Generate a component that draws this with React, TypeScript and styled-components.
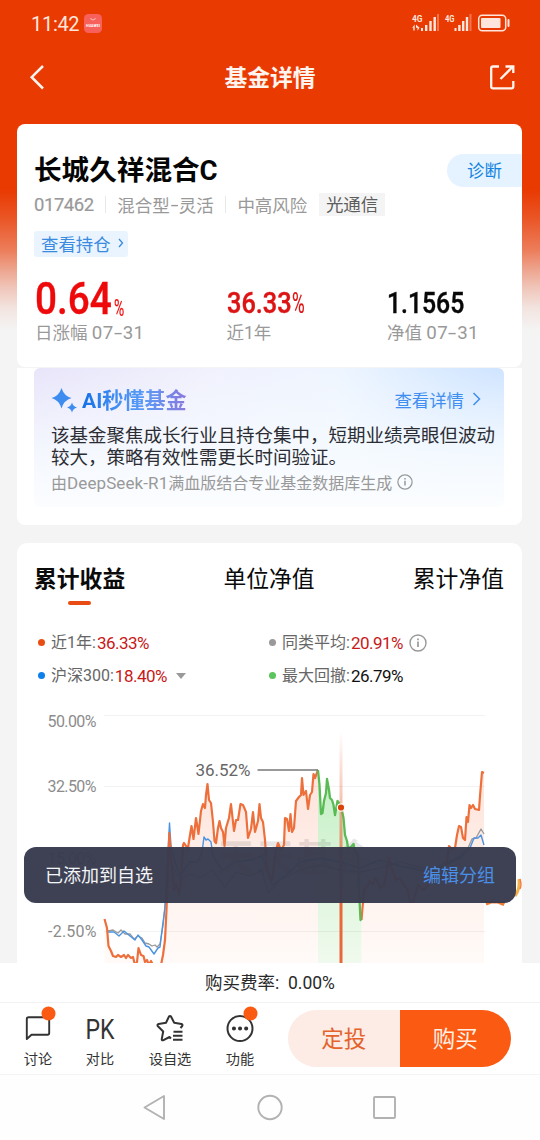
import React from 'react';
import styled, { createGlobalStyle } from 'styled-components';

const Global = createGlobalStyle`
  * { box-sizing: border-box; }
  body {
    margin: 0;
    font-family: Roboto, "Noto Sans CJK SC", sans-serif;
    background: #f4f4f4;
  }
`;

const Screen = styled.div`
  position: relative;
  width: 540px;
  height: 1140px;
  overflow: hidden;
  display: flex;
  flex-direction: column;
  background: linear-gradient(#e93a02 0, #e93a02 190px, #ea5525 218px, #ec7d5a 250px, #eda18a 268px, #f0c6ba 288px, #f2e4df 308px, #f4f4f4 330px);
  white-space: nowrap;
`;

const StatusBar = styled.div`
  flex: none;
  height: 46px;
  display: flex;
  align-items: center;
  padding: 0 30px 0 31px;
  color: #ffe6dc;
`;

const Clock = styled.span`
  font-size: 20px;
  letter-spacing: -0.3px;
  margin-right: 5px;
  padding-top: 1px;
`;

const StatusIcons = styled.svg`
  margin-left: auto;
`;

const TitleBar = styled.header`
  flex: none;
  height: 78px;
  display: flex;
  justify-content: space-between;
  padding: 18px 25px 0 29px;
  color: #fff4ee;
`;

const PageTitle = styled.h1`
  margin: 2px 0 0 6px;
  font-size: 22.8px;
  line-height: 26px;
  font-weight: 700;
`;

const Card = styled.section<{ $h: number; $r: string; $mt?: number }>`
  flex: none;
  height: ${p => p.$h}px;
  margin: ${p => p.$mt ?? 0}px 18px 0 17px;
  border-radius: ${p => p.$r};
  background: #fff;
  overflow: hidden;
`;

const NameRow = styled.div`
  display: flex;
  justify-content: space-between;
  align-items: center;
  height: 40px;
  margin-top: 26px;
  padding-left: 17px;
`;

const FundName = styled.h2`
  margin: 0;
  padding-top: 2px;
  font-size: 27.6px;
  font-weight: 700;
  line-height: 42px;
  color: #050505;
`;

const DiagnoseButton = styled.button`
  width: 75px;
  height: 33px;
  border: 0;
  padding: 0 0 1px;
  border-radius: 17px 0 0 17px;
  background: #e4f3ff;
  color: #1583e0;
  font: inherit;
  font-size: 17.4px;
`;

const MetaRow = styled.div`
  display: flex;
  align-items: center;
  height: 24px;
  margin-top: 3px;
  padding: 0 0 1px 17px;
  font-size: 17.5px;
  color: #999;
`;

const Dash = styled.span`
  display: inline-block;
  width: 9px;
  text-align: center;
  transform: scaleX(1.6);
`;

const Code = styled.span`
  font-size: 18.5px;
  letter-spacing: -0.45px;
  -webkit-text-stroke: 0.2px #999;
`;

const Divider = styled.i`
  width: 1px;
  height: 17px;
  margin: 0 11.3px;
  background: #e8e8e8;
`;

const Tag = styled.span`
  height: 23px;
  line-height: 24px;
  margin-left: 11.5px;
  padding: 0 7px;
  background: #f4f4f4;
  color: #5d5d5d;
`;

const HoldingsLink = styled.a`
  display: flex;
  align-items: center;
  gap: 7px;
  width: 94px;
  height: 26px;
  margin: 14px 0 0 17px;
  padding: 0 0 2px 7px;
  border-radius: 3px;
  background: #eaf4ff;
  color: #3a8be0;
  font-size: 17.4px;
`;

const Stats = styled.div`
  display: grid;
  grid-template-columns: 191.5px 160.5px 1fr;
  margin-top: 18px;
  padding-left: 18px;
`;

const Figure = styled.div<{ $c: string }>`
  display: flex;
  align-items: flex-end;
  height: 43px;
  color: ${p => p.$c};
`;

const Digits = styled.span<{ $size: number; $w: number; $sx: number; $drop: number; $thin?: boolean }>`
  width: ${p => p.$w}px;
  font-size: ${p => p.$size}px;
  line-height: 1;
  font-weight: ${p => (p.$thin ? 400 : 500)};
  -webkit-text-stroke: ${p => (p.$thin ? 0.2 : 0.4)}px currentColor;
  transform: scaleX(${p => p.$sx});
  transform-origin: left bottom;
  margin-bottom: ${p => p.$drop}px;
`;

const StatLabel = styled.div`
  height: 24px;
  margin-top: 3px;
  line-height: 24px;
  font-size: 17.5px;
  color: #999;
`;

const StatDate = styled.span`
  font-size: 18.7px;
  letter-spacing: 0.4px;
`;

const AiPanel = styled.div`
  height: 139px;
  margin: 0 18px 0 17px;
  padding: 17px 0 0 17px;
  border-radius: 6px;
  background:
    linear-gradient(to bottom, rgba(247,251,255,0) 0, rgba(247,251,255,.8) 60%, #fbfdff 100%),
    radial-gradient(circle at 100% 0, #cfe4ff 0, rgba(225,239,255,0) 35%),
    linear-gradient(100deg, #e8e5fa 0, #f0f1fd 35%, #eff6ff 65%, #e9f3ff 100%);
`;

const AiHead = styled.div`
  display: flex;
  align-items: center;
  height: 30px;
`;

const AiTitle = styled.span`
  margin-left: 4px;
  font-size: 21.1px;
  line-height: 32px;
  padding-top: 1px;
  font-weight: 700;
  color: transparent;
  background: linear-gradient(90deg, #1270e6, #3f8cf2 30%, #5a9af5 60%, #8b78dc);
  background-clip: text;
  -webkit-background-clip: text;
`;

const DetailLink = styled.a`
  display: flex;
  align-items: center;
  gap: 8px;
  margin-left: auto;
  padding: 0 23px 2px 0;
  font-size: 17.4px;
  color: #3f8ef0;
`;

const Summary = styled.p`
  margin: 11px 0 0;
  font-size: 18.5px;
  line-height: 21.7px;
  color: #2b2d33;
`;

const Source = styled.div`
  display: flex;
  align-items: center;
  height: 24px;
  margin-top: 1px;
  font-size: 16px;
  color: #999;
  svg { margin-left: 5px; }
`;

const Model = styled.span`
  font-size: 17px;
  letter-spacing: 0.1px;
`;

const Tabs = styled.nav`
  display: flex;
  justify-content: space-between;
  height: 64px;
  padding: 20px 18px 0 17px;
`;

const Tab = styled.div<{ $on?: boolean }>`
  display: flex;
  flex-direction: column;
  align-items: center;
  font-size: 22.8px;
  line-height: 34px;
  font-weight: ${p => (p.$on ? 700 : 400)};
  color: #0a0a0a;
  &::after {
    content: '';
    display: ${p => (p.$on ? 'block' : 'none')};
    width: 23px;
    height: 4px;
    margin-top: 3.5px;
    border-radius: 2px;
    background: #e84c14;
  }
`;

const Legend = styled.div`
  display: grid;
  grid-template-columns: 231px 1fr;
  grid-auto-rows: 33px;
  align-items: center;
  height: 93px;
  padding: 19px 0 0 21px;
  font-size: 16px;
  color: #666;
`;

const LegendItem = styled.div`
  display: flex;
  align-items: center;
  height: 20px;
  line-height: 20px;
`;

const Dot = styled.i<{ $c: string }>`
  width: 7px;
  height: 7px;
  margin-right: 6px;
  border-radius: 50%;
  background: ${p => p.$c};
`;

const Value = styled.b<{ $c: string }>`
  font-weight: 400;
  font-size: 17px;
  letter-spacing: -0.5px;
  margin: 0 6px 0 1px;
  color: ${p => p.$c};
`;

const DropArrow = styled.svg`
  margin-left: 3px;
`;

const Chart = styled.svg`
  display: block;
`;

const Toast = styled.div`
  position: absolute;
  left: 24px;
  top: 847px;
  width: 492px;
  height: 55.5px;
  display: flex;
  align-items: center;
  justify-content: space-between;
  padding: 0 21px 1px 21px;
  border-radius: 12px;
  background: rgba(56, 59, 77, 0.97);
  color: #f4f5f8;
  font-size: 18px;
`;

const ToastAction = styled.a`
  color: #4a8fe8;
`;

const Fee = styled.div`
  flex: none;
  height: 40px;
  line-height: 40px;
  border-bottom: 1px solid #f2f2f2;
  background: #fff;
  text-align: center;
  font-size: 17.5px;
  color: #2a2a2a;
`;

const ActionBar = styled.footer`
  flex: none;
  display: flex;
  height: 72px;
  padding-left: 7px;
  border-bottom: 1px solid #f4f4f4;
  background: #fff;
`;

const Action = styled.div<{ $w: number }>`
  width: ${p => p.$w}px;
  display: flex;
  flex-direction: column;
  align-items: center;
  font-size: 14.2px;
  line-height: 20px;
  color: #333;
`;

const ActionIcon = styled.svg`
  flex: none;
  margin-bottom: 1px;
`;

const Buttons = styled.div`
  display: flex;
  width: 223px;
  height: 57.5px;
  margin: 6.5px 0 0 17px;
  border-radius: 29px;
  overflow: hidden;
`;

const TradeButton = styled.button<{ $buy?: boolean }>`
  flex: 1;
  border: 0;
  padding: 0 0 2px;
  font: inherit;
  font-size: 22.5px;
  background: ${p => (p.$buy ? '#fb5a13' : '#fcece5')};
  color: ${p => (p.$buy ? '#fff0e4' : '#e4622c')};
`;

const SystemNav = styled.div`
  flex: 1;
  background: #fefefe;
`;

const InfoIcon = ({ s }: { s: number }) => (
  <svg width={s} height={s} viewBox="0 0 18 18" fill="none" stroke="#999" strokeWidth="1.4">
    <circle cx="9" cy="9" r="8" />
    <path d="M9 7.6v5.4M9 4.6v1.7" strokeWidth="1.7" />
  </svg>
);

const rise =
  'M104.5 919L107 928L108.5 946L111 951L113 956L116 957L118 955L121 957L124 955L126 958L128 955L131 958L133 957L135 965L137 962L138.5 948L141 955L143.5 956L145 962L147 960L149 965L151 961L153 965H161L163 955L165 940L166.5 910L168 870L169.3 833L171 855L174 890L176 883L179 894L181 880L183 845L184 843L186 846L188 848L190 835L191.5 826L193.5 839L196 818L198.5 834L201 811L203 804L205 808L206 795L207.5 784L209 800L211 803L213 822L214.5 841L216 843L218 828L219.5 821L221 828L223 832L224.5 846L226 828L229 818L231 804L234 831L236 820L238 820L240.5 804L243 805L246 812L248 838L251 829L253 812L255 832L258 821L259.5 804L261 818L263 822L265 840L267 870L272 880L276 850L278 843L281 850L284 845L285 818L287 819L289 831L290.5 814L292 832L294 828L296 801L299 797L301 795L302 778L303.5 795L306 791L308 809L310 795L312 792L313.5 774L315 778L318 770';
const fall =
  'M318 770L319.5 785L321 814L322.5 813L324 801L326 793L327 779L329 790L330 798L332 800L333.5 805L335 815L337.5 801L341 806L343.5 818L345 835L347 841L348 848L351 847L353.5 844L355 850L358 855L359 890L360.5 920H361.5';
const rebound =
  'M361.5 920L364 890L368 885L370 881L373 884L375 878L378 882L380 888L384 885L389 858L392 870L396 880L400 878L404 885L408 890L410 902L413 902L418 885L424 890L430 882L440 880L447 862L449 846L452 849L455 848L457 835L459 826L461 827L463 838L465 840L466.5 817L468 822L469.5 805L471 808L473 805L475 809L479 810L480 796L482 772L484 773';

const App = () => (
  <>
    <Global />
    <Screen>
      <StatusBar>
        <Clock>11:42</Clock>
        <svg width="18" height="19" viewBox="0 0 18 19">
          <rect width="18" height="19" rx="4.5" fill="#f8605c" />
          <path d="M6.2 4.5q2.8 3 5.6 0" stroke="#ffc5b8" fill="none" />
          <text x="2" y="13" fontSize="3.6" fontWeight="700" fill="#fff" textLength="14">HUAWEI</text>
        </svg>
        <StatusIcons width="98" height="20" viewBox="412 13 98 20">
          <g fill="#ffe6dc" fontSize="9.5" fontWeight="700">
            <text x="412" y="22" textLength="10.5" lengthAdjust="spacingAndGlyphs">4G</text>
            <text x="445" y="22" textLength="9.5" lengthAdjust="spacingAndGlyphs">4G</text>
            <path d="M412 28l2.7-3.5v6h-1.4v-3zM416 24.5l3.5 3.2-2 3v-3h-1.5z" />
            <path d="M421 28h2v3h-2zM425 25h2.4v6H425zM429.300 21h2.400v10h-2.400zM433.500 17h2.400v14h-2.400z" />
            <path d="M454.500 28h2v3h-2zM458.200 25h2.400v6h-2.400zM462 21h2.400v10H462zM465.800 17h2.400v14h-2.400z" />
            <path d="M437 14h2v17h-2zM469.500 14h2v17h-2z" opacity=".35" />
            <rect x="481" y="18" width="19.500" height="10" rx="1" />
            <rect x="507.500" y="19" width="2" height="8" rx="1" />
          </g>
          <rect x="478.700" y="15.200" width="27" height="15.500" rx="3.500" fill="none" stroke="#ffe6dc" strokeWidth="1.500" />
        </StatusIcons>
      </StatusBar>
      <TitleBar>
        <svg width="16" height="26" viewBox="0 0 16 26" fill="none" stroke="currentColor" strokeWidth="2.5">
          <path d="M14 2L2.700 13.200L14 24.500" />
        </svg>
        <PageTitle>基金详情</PageTitle>
        <svg width="26" height="26" viewBox="0 0 26 26" fill="none" stroke="currentColor" strokeWidth="2.300">
          <path d="M10 2.500H4Q2.200 2.500 2.200 4.300V22.500Q2.200 24.300 4 24.300H22.500Q24.300 24.300 24.300 22.500V17" />
          <path d="M11.500 15L23.500 3M16.500 2.500H24.300V9" />
        </svg>
      </TitleBar>

      <Card $h={243} $r="8px">
        <NameRow>
          <FundName>长城久祥混合C</FundName>
          <DiagnoseButton>诊断</DiagnoseButton>
        </NameRow>
        <MetaRow>
          <Code>017462</Code>
          <Divider />
          混合型<Dash>-</Dash>灵活
          <Divider />
          中高风险
          <Tag>光通信</Tag>
        </MetaRow>
        <HoldingsLink>
          查看持仓
          <svg width="6" height="10" viewBox="0 0 6 10" fill="none" stroke="currentColor" strokeWidth="1.300">
            <path d="M1 1l3.500 4L1 9" />
          </svg>
        </HoldingsLink>
        <Stats>
          <div>
            <Figure $c="#ee0a0a">
              <Digits $size={44.5} $w={78.5} $sx={0.87} $drop={-3}>0.64</Digits>
              <Digits $size={24} $w={14} $sx={0.58} $drop={-1.5} $thin>%</Digits>
            </Figure>
            <StatLabel>
              日涨幅 <StatDate>07<Dash>-</Dash>31</StatDate>
            </StatLabel>
          </div>
          <div>
            <Figure $c="#dc1414">
              <Digits $size={28.8} $w={65} $sx={0.88} $drop={0}>36.33</Digits>
              <Digits $size={28.8} $w={14} $sx={0.6} $drop={0} $thin>%</Digits>
            </Figure>
            <StatLabel>近1年</StatLabel>
          </div>
          <div>
            <Figure $c="#080808">
              <Digits $size={28.8} $w={78} $sx={0.86} $drop={0}>1.1565</Digits>
            </Figure>
            <StatLabel>
              净值 <StatDate>07<Dash>-</Dash>31</StatDate>
            </StatLabel>
          </div>
        </Stats>
      </Card>

      <Card $h={157} $r="0 0 8px 8px" $mt={1}>
        <AiPanel>
          <AiHead>
            <svg width="27" height="26" viewBox="0 0 27 26" fill="#3f8cf0">
              <path d="M10.500 1Q13 9 20.500 11Q13 13 10.500 21.500Q8 13 0.500 11Q8 9 10.500 1Z" />
              <path d="M21 15.500Q22 19.500 26 20.500Q22 21.500 21 25.500Q20 21.500 16 20.500Q20 19.500 21 15.500Z" />
            </svg>
            <AiTitle>AI秒懂基金</AiTitle>
            <DetailLink>
              查看详情
              <svg width="9" height="14" viewBox="0 0 9 14" fill="none" stroke="currentColor" strokeWidth="1.500">
                <path d="M1.500 1l6 6-6 6" />
              </svg>
            </DetailLink>
          </AiHead>
          <Summary>
            该基金聚焦成长行业且持仓集中，短期业绩亮眼但波动
            <br />
            较大，策略有效性需更长时间验证。
          </Summary>
          <Source>
            <span>
              由<Model>DeepSeek-R1</Model>满血版结合专业基金数据库生成
            </span>
            <InfoIcon s={16} />
          </Source>
        </AiPanel>
      </Card>

      <Card $h={420} $r="10px 10px 0 0" $mt={18}>
        <Tabs>
          <Tab $on>累计收益</Tab>
          <Tab>单位净值</Tab>
          <Tab>累计净值</Tab>
        </Tabs>
        <Legend>
          <LegendItem>
            <Dot $c="#e84e14" />近1年:<Value $c="#c81818">36.33%</Value>
          </LegendItem>
          <LegendItem>
            <Dot $c="#999" />同类平均:<Value $c="#c81818">20.91%</Value>
            <InfoIcon s={18} />
          </LegendItem>
          <LegendItem>
            <Dot $c="#0f80ea" />沪深300:<Value $c="#c81818">18.40%</Value>
            <DropArrow width="10" height="6" viewBox="0 0 10 6">
              <path d="M0 0h10L5 6z" fill="#999" />
            </DropArrow>
          </LegendItem>
          <LegendItem>
            <Dot $c="#5bc45b" />最大回撤:<Value $c="#111">26.79%</Value>
          </LegendItem>
        </Legend>
        <Chart width="505" height="263" viewBox="17 700 505 263">
          <defs>
            <linearGradient id="warm" gradientUnits="userSpaceOnUse" x1="0" y1="770" x2="0" y2="963">
              <stop offset="0" stopColor="#fde3da" />
              <stop offset=".7" stopColor="#fff4f0" />
              <stop offset="1" stopColor="#fffaf8" />
            </linearGradient>
            <linearGradient id="drop" gradientUnits="userSpaceOnUse" x1="0" y1="770" x2="0" y2="963">
              <stop offset="0" stopColor="#c4efc4" />
              <stop offset="1" stopColor="#f0faee" />
            </linearGradient>
            <linearGradient id="cursor" gradientUnits="userSpaceOnUse" x1="0" y1="732" x2="0" y2="900">
              <stop offset="0" stopColor="#e9683a" stopOpacity="0" />
              <stop offset="1" stopColor="#e9683a" />
            </linearGradient>
          </defs>
          <path d={`${rise}V970H104.500Z`} fill="url(#warm)" />
          <path d={`${rebound}V970H361.500Z`} fill="url(#warm)" />
          <path d={`${fall}V970H318Z`} fill="url(#drop)" />
          <path d="M104 715.500H485M104 786.500H485M104 859H485M104 931.500H485" stroke="#000" strokeOpacity=".05" />
          <text x="217" y="871" fontSize="38" fontWeight="700" fill="#000" fillOpacity=".09" textLength="156">天天基金</text>
          <g fontSize="16" fill="#8c8c8c">
            <text x="47.500" y="727" textLength="49">50.00%</text>
            <text x="47.500" y="792" textLength="49">32.50%</text>
            <text x="47.500" y="864" textLength="49">15.00%</text>
            <text x="48" y="936.500" textLength="48.500">-2.50%</text>
          </g>
          <g fill="none" strokeLinejoin="round">
            <path
              d="M108 931L113 930L118 933L121 930L125 934L130 934L134 939L138 936L142 938L145 943L149 944L152 946L155 945L157 947L160 944L163 926L166 895L169 845L172 865L180 880L190 874L200 878L212 870L225 887L236 872L250 876L262 870L268 893L280 880L300 870L320 865L340 870L360 872L380 868L400 862L430 870L460 856L468 848L472 839L476 838L481 829L484 834"
              stroke="#999"
              strokeWidth="1.300"
            />
            <path
              d="M108 932L114 932L119 936L124 931L130 936L135 940L138 935L142 940L146 946L149 947L154 954L158 948L160 947L162 930L165 908L167 870L169.500 823L171 846L175 862L180 876L190 862L198 862L202 852L204 837L206 840L208 839L211 842L213 856L222 870L235 862L250 860L262 856L272 885L285 876L300 862L320 858L340 862L360 868L380 860L400 866L430 872L460 858L470 848L474 838L478 838L481 835L484 845"
              stroke="#4b93e2"
              strokeWidth="1.400"
            />
            <path d={rise} stroke="#ed703c" strokeWidth="2.200" />
            <path d={rebound} stroke="#ed703c" strokeWidth="2.200" />
            <path d={fall} stroke="#5abb55" strokeWidth="2.300" />
          </g>
          <rect x="339.500" y="732" width="3" height="231" fill="url(#cursor)" />
          <circle cx="341" cy="807.500" r="3.700" fill="#d9430c" stroke="#fff" strokeWidth="1.200" />
          <path d="M257.500 770H318" stroke="#777" strokeWidth="1.700" />
          <text x="195.500" y="776" fontSize="17" fill="#666" textLength="55">36.52%</text>
          <path d="M485 901l1.500 4.500 5-2h6l6 2.500 2.500-5z" fill="#ee7a35" />
          <path d="M515 896q5-6 4-17" fill="none" stroke="#f5b04a" strokeWidth="3" />
          <path d="M520 889q2-4 0-10" fill="none" stroke="#ef7b45" strokeWidth="1.400" />
        </Chart>
      </Card>

      <Fee>购买费率:&nbsp; 0.00%</Fee>
      <ActionBar>
        <Action $w={62}>
          <ActionIcon width="40" height="45" viewBox="18 1003 40 45" fill="none" stroke="#333" strokeWidth="1.900">
            <path d="M26.800 1039V1019Q26.800 1017.300 28.500 1017.300H47.500Q49.200 1017.300 49.200 1019V1033Q49.200 1034.700 47.500 1034.700H31.500Z" strokeLinejoin="round" />
            <circle cx="48.500" cy="1013.500" r="7" fill="#fb5a13" stroke="none" />
          </ActionIcon>
          讨论
        </Action>
        <Action $w={62}>
          <ActionIcon width="40" height="45" viewBox="80 1003 40 45">
            <text x="85.500" y="1039" fontSize="27" fill="#333" textLength="29" lengthAdjust="spacingAndGlyphs">PK</text>
          </ActionIcon>
          对比
        </Action>
        <Action $w={78}>
          <ActionIcon width="40" height="45" viewBox="150 1003 40 45" fill="none" stroke="#333" strokeWidth="2">
            <path d="M171 1038.500L169.500 1037L163 1040.300Q161.500 1040.500 161.800 1038.800L163.200 1031.500L157.700 1026Q157 1024.300 158.600 1024L166 1022.800L169 1016.500Q170 1015.300 171 1016.500L174.200 1022.800L181.500 1024Q183 1024.500 182.200 1026L180.500 1028" strokeLinejoin="round" />
            <path d="M173.500 1031.700H182.500M173 1035.700H182.500M173 1039.700H182.500" />
          </ActionIcon>
          设自选
        </Action>
        <Action $w={62}>
          <ActionIcon width="40" height="45" viewBox="220 1003 40 45" fill="none" stroke="#333" strokeWidth="2">
            <circle cx="240" cy="1028.500" r="12.500" />
            <path d="M233.900 1028.500h.1M240 1028.500h.1M246.100 1028.500h.1" strokeWidth="4" strokeLinecap="round" />
            <circle cx="250.500" cy="1013.500" r="7" fill="#fb5a13" stroke="none" />
          </ActionIcon>
          功能
        </Action>
        <Buttons>
          <TradeButton>定投</TradeButton>
          <TradeButton $buy>购买</TradeButton>
        </Buttons>
      </ActionBar>
      <SystemNav>
        <svg width="540" height="65" viewBox="0 1075 540 65" fill="none" stroke="#b2b2b2" strokeWidth="1.900" strokeLinejoin="round">
          <path d="M164 1096V1119L144.500 1107.500Z" />
          <circle cx="270" cy="1107.500" r="11.700" />
          <rect x="374" y="1097" width="21" height="21" rx="1" />
        </svg>
      </SystemNav>

      <Toast>
        已添加到自选
        <ToastAction>编辑分组</ToastAction>
      </Toast>
    </Screen>
  </>
);

export default App;
